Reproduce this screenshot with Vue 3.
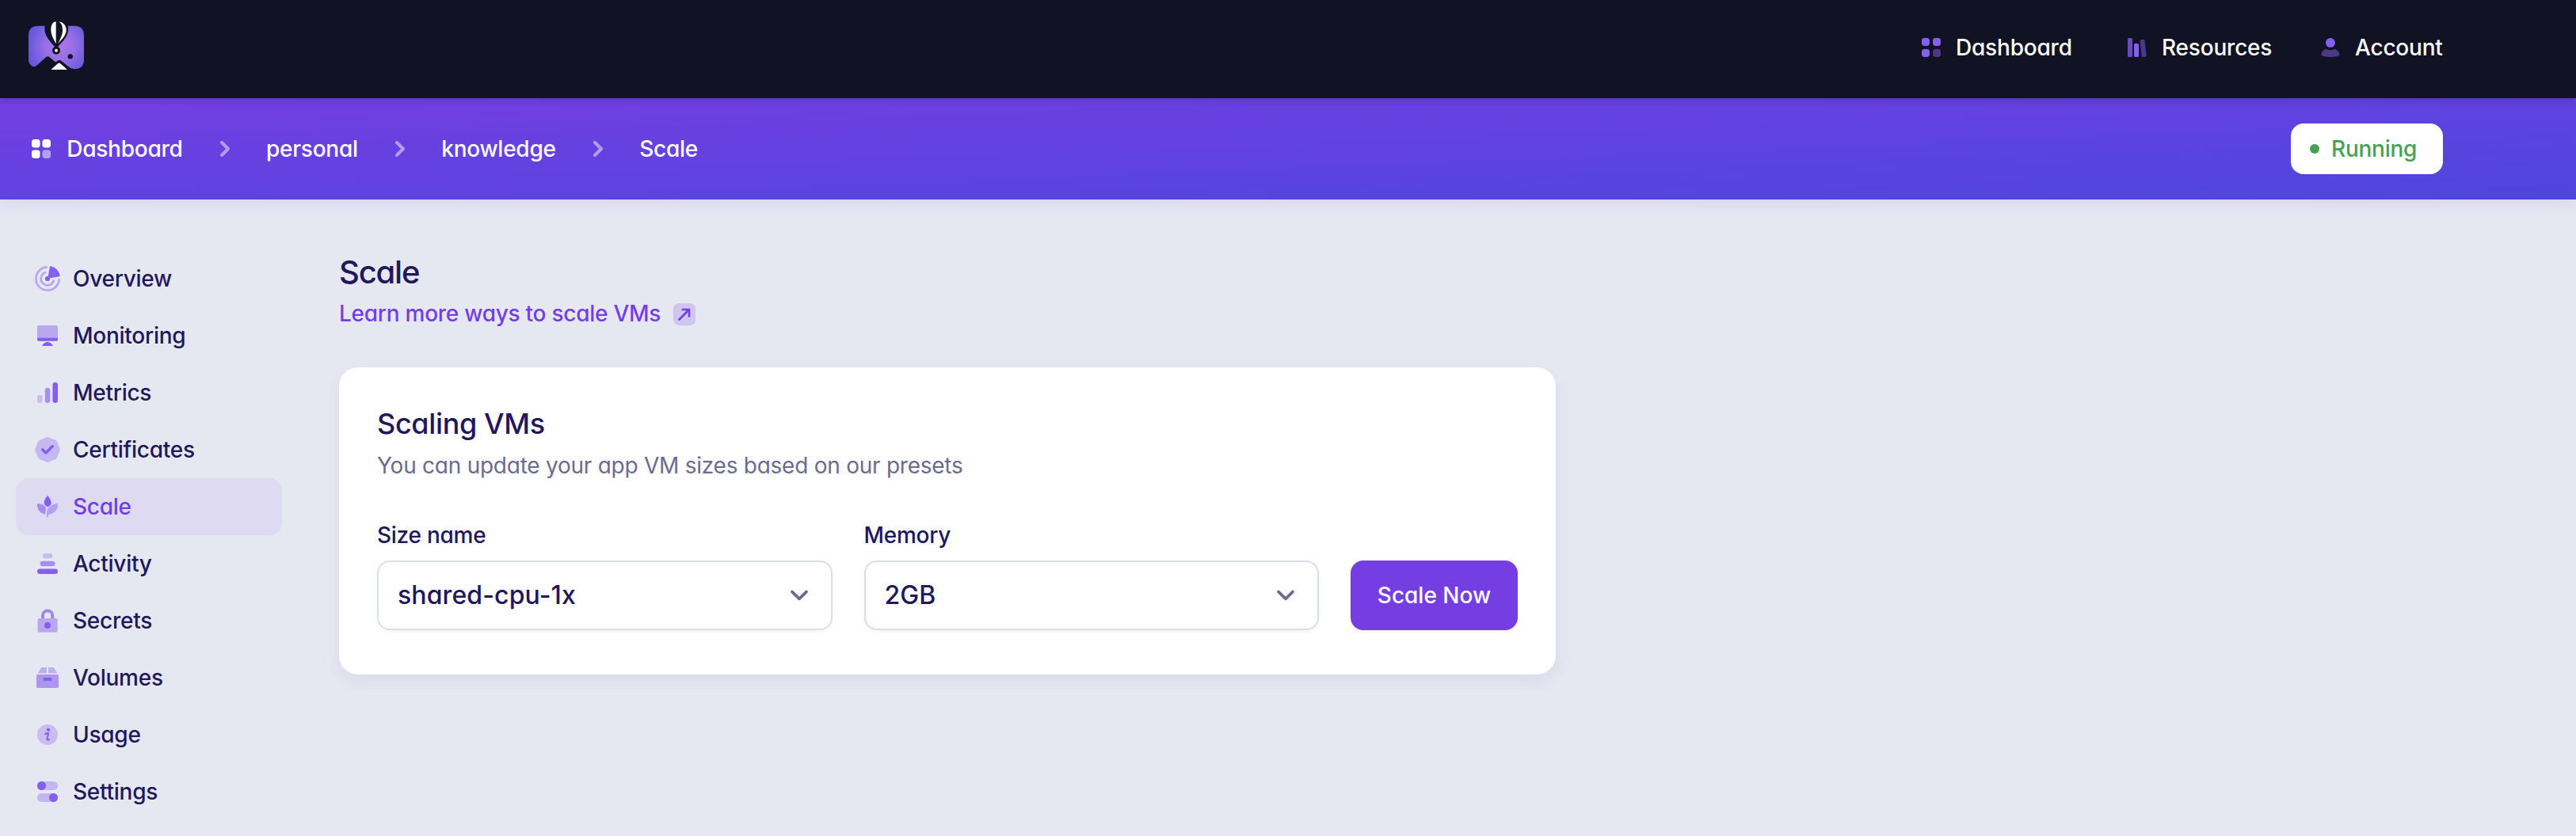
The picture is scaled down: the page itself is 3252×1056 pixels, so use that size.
<script setup>
const solid = '#855fee'
const sidebar = [
  { name: 'Overview' },
  { name: 'Monitoring' },
  { name: 'Metrics' },
  { name: 'Certificates' },
  { name: 'Scale', active: true },
  { name: 'Activity' },
  { name: 'Secrets' },
  { name: 'Volumes' },
  { name: 'Usage' },
  { name: 'Settings' },
]
const crumbs = ['personal', 'knowledge', 'Scale']
const fields = [
  { label: 'Size name', value: 'shared-cpu-1x' },
  { label: 'Memory', value: '2GB' },
]
</script>

<template>
  <div class="page">
    <header class="top">
      <a class="logo">
        <svg width="72" height="64" viewBox="0 0 216 192">
          <defs>
            <radialGradient id="logoGlow" gradientUnits="userSpaceOnUse" cx="118" cy="96" r="118">
              <stop offset="0" stop-color="#ab76e8" />
              <stop offset="0.45" stop-color="#9870e4" />
              <stop offset="1" stop-color="#6757dc" />
            </radialGradient>
          </defs>
          <path d="M36 20H174Q210 20 210 56V148Q210 184 174 184Q162 184 150 174L124 153L20 176Q0 168 0 148V56Q0 20 36 20Z" fill="url(#logoGlow)" />
          <path d="M16 177Q24 176 34 168L66 139Q73 133 80 139L103 158L110 152Q117 147 124 153L152 176Q162 184 172 184V192H0V177Z" fill="#111223" />
          <path d="M62 19C58 45 66 64 98 98V104H112V98C146 64 154 45 149 19L134 0H78Z" fill="#111223" />
          <circle cx="105" cy="113" r="15" fill="#111223" />
          <circle cx="105" cy="113" r="6" fill="#fff" />
          <path d="M104 4C90 5 85 20 85 36C85 54 96 72 104 88Z" fill="#fff" />
          <path d="M115 4C134 7 143 20 143 36C143 56 124 74 111 88C122 68 129 52 129 36C129 20 124 10 115 4Z" fill="#fff" />
          <circle cx="158" cy="136" r="9.5" fill="#111223" />
          <path d="M85 186L112 162Q116 159 120 162L147 186Z" fill="#fff" />
        </svg>
      </a>
      <nav class="menu">
        <a class="menu-item dash">
          <svg width="24" height="24" viewBox="0 0 24 24" :fill="solid">
            <rect width="10" height="10" rx="3.4" /><rect x="14" width="10" height="10" rx="3.4" />
            <rect y="14" width="10" height="10" rx="3.4" /><rect x="14" y="14" width="10" height="10" rx="3.4" fill="#4c3788" />
          </svg>
          <span class="t28">Dashboard</span>
        </a>
        <a class="menu-item res">
          <svg width="24" height="24" viewBox="0 0 24 24">
            <rect width="6" height="24" rx="1.6" fill="#6a4cbe" />
            <rect x="8" y="7" width="6" height="17" rx="1.6" :fill="solid" />
            <rect x="16.6" y="2" width="6" height="22" rx="1.6" fill="#4c3788" transform="rotate(-6.5 19.6 13)" />
          </svg>
          <span class="t28">Resources</span>
        </a>
        <a class="menu-item acc">
          <svg width="24" height="24" viewBox="0 0 24 24">
            <circle cx="12" cy="6" r="6" :fill="solid" />
            <path d="M6.5 13.8C8 15.6 16 15.6 17.5 13.8C21 15 23.5 18 23.5 21C23.5 23 18 24 12 24S.5 23 .5 21C.5 18 3 15 6.5 13.8Z" fill="#4c3788" />
          </svg>
          <span class="t28">Account</span>
        </a>
      </nav>
    </header>

    <div class="bar">
      <nav class="crumbs">
        <svg class="home" width="24" height="24" viewBox="0 0 24 24" fill="#fff">
          <rect width="10.5" height="10.5" rx="3.4" /><rect x="13.5" width="10.5" height="10.5" rx="3.4" />
          <rect y="13.5" width="10.5" height="10.5" rx="3.4" /><rect x="13.5" y="13.5" width="10.5" height="10.5" rx="3.4" fill="#b5a0f0" />
        </svg>
        <span class="t28">Dashboard</span>
        <template v-for="c in crumbs" :key="c">
          <svg class="sep" width="12" height="20" viewBox="0 0 12 20" fill="none" stroke="#b29cee" stroke-width="4" stroke-linecap="round" stroke-linejoin="round">
            <path d="M2 2L10 10L2 18" />
          </svg>
          <span class="t28">{{ c }}</span>
        </template>
      </nav>
      <div class="status"><i class="dot"></i><span class="t28">Running</span></div>
    </div>

    <div class="body">
      <aside class="side">
        <a v-for="item in sidebar" :key="item.name" class="side-item" :class="{ active: item.active }">
          <svg width="32" height="32" viewBox="0 0 32 32" :fill="solid">
            <g v-if="item.name === 'Overview'">
              <g fill="none" stroke="#b9a5f0" stroke-width="2.7" stroke-linecap="round">
                <path d="M14.7 1.4A14.65 14.65 0 1 0 30.6 17.2" />
                <path d="M13.3 8.3A8.2 8.2 0 1 0 23.7 18.7" />
              </g>
              <circle cx="16" cy="16" r="3.1" />
              <path d="M16.2 15.8L18.8 1.2Q19 0 20.2 .3C26 1.6 30.4 6 31.7 11.8Q32 13 30.8 13.2Z" />
            </g>
            <g v-else-if="item.name === 'Monitoring'">
              <rect x="3" y="3" width="26" height="20" rx="2" fill="#b9a8ef" />
              <path d="M3 18.7H29V20.8Q29 22.8 27 22.8H5Q3 22.8 3 20.8Z" />
              <path d="M9.3 29C9.8 26.5 13 24 16 24S22.2 26.5 22.7 29Z" />
            </g>
            <g v-else-if="item.name === 'Metrics'">
              <rect x="3" y="19" width="6.6" height="10" rx="3.3" fill="#c8bcf1" />
              <rect x="12.8" y="9.7" width="6.5" height="19.3" rx="3.2" fill="#a88ef0" />
              <rect x="22.4" y="3" width="6.6" height="26" rx="3.3" />
            </g>
            <g v-else-if="item.name === 'Certificates'">
              <g fill="#c5b8f1">
                <circle cx="16" cy="16" r="14.7" />
                <circle v-for="n in 8" :key="n" cx="16" cy="6" r="5.9" :transform="`rotate(${n * 45} 16 16)`" />
              </g>
              <path d="M9.8 16L14 20L22.2 11.7" fill="none" :stroke="solid" stroke-width="3.7" stroke-linecap="round" stroke-linejoin="round" />
            </g>
            <g v-else-if="item.name === 'Scale'">
              <path d="M16 2C18.6 4.7 20.7 8.2 20.7 11.5C20.7 13.5 18.5 15.3 16 16.2C13.5 15.3 11.6 13.5 11.6 11.5C11.6 8.2 13.4 4.7 16 2Z" />
              <path d="M3 12.2C9 11.8 13.8 15 14.2 18.5C13.4 20.5 13.5 23 13 25.6C6.5 24.5 2.6 19 3 12.2Z" fill="#a88bef" />
              <path d="M29 12.2C21.5 11.6 15.3 17 15 23V28.3Q15 29.5 16 29.5T17 28.3V25.8C24.5 25.4 29.4 19.5 29 12.2Z" fill="#b3a0ef" />
            </g>
            <g v-else-if="item.name === 'Activity'">
              <rect x="9.8" y="3" width="12.5" height="6.6" rx="3.3" fill="#c8bcf1" />
              <rect x="6.6" y="12.8" width="19" height="6.5" rx="3.2" fill="#a88ef0" />
              <rect x="3" y="22.4" width="26" height="6.6" rx="3.3" />
            </g>
            <g v-else-if="item.name === 'Secrets'">
              <path d="M10 14V9.5A6.1 6.1 0 0 1 22.2 9.5V14" fill="none" stroke="#a284ef" stroke-width="4" />
              <rect x="3.5" y="13" width="25.2" height="17.7" rx="2.5" fill="#b9a8ef" />
              <circle cx="16" cy="22" r="4" />
            </g>
            <g v-else-if="item.name === 'Volumes'">
              <path d="M8.3 3H15V10.4H3.7Z M17 3H23.8L28.4 10.4H17Z" fill="#beb0f0" />
              <rect x="2" y="12" width="28" height="17" rx="1.3" fill="#ad97ee" />
              <rect x="10.7" y="16" width="10.6" height="4" rx=".6" />
            </g>
            <g v-else-if="item.name === 'Usage'">
              <circle cx="16" cy="16" r="13" fill="#c8bcf1" />
              <circle cx="17" cy="9.9" r="2.1" />
              <path d="M13.2 15.3Q14.8 13.7 17.2 14.2L15.3 21.2Q15 22.9 18 22.3" fill="none" :stroke="solid" stroke-width="2.1" stroke-linecap="round" stroke-linejoin="round" />
            </g>
            <g v-else>
              <rect x="3" y="3" width="26" height="11" rx="5.5" fill="#c3b5f0" />
              <rect x="3" y="18" width="26" height="11" rx="5.5" fill="#c3b5f0" />
              <circle cx="8.5" cy="8.5" r="5.5" /><circle cx="23.5" cy="23.5" r="5.5" />
            </g>
          </svg>
          <span class="t28">{{ item.name }}</span>
        </a>
      </aside>

      <main class="main">
        <h1>Scale</h1>
        <a class="learn">
          <span class="t28">Learn more ways to scale VMs</span>
          <svg width="28" height="28" viewBox="0 0 28 28">
            <rect width="28" height="28" rx="7" fill="#d0c5ee" />
            <path d="M7.5 20.5L20 8M11.8 8H20V16.5" fill="none" stroke="#743ee4" stroke-width="2.7" stroke-linecap="round" stroke-linejoin="round" />
          </svg>
        </a>
        <section class="card">
          <h2>Scaling VMs</h2>
          <p>You can update your app VM sizes based on our presets</p>
          <div class="form">
            <label v-for="f in fields" :key="f.label" class="field">
              <span class="t28">{{ f.label }}</span>
              <span class="select">
                <span class="value">{{ f.value }}</span>
                <svg width="24" height="16" viewBox="0 0 24 16" fill="none" stroke="#6b6c8d" stroke-width="3.8" stroke-linecap="round" stroke-linejoin="round">
                  <path d="M3 3.5L12 12.3L21 3.5" />
                </svg>
              </span>
            </label>
            <button class="go" type="button">Scale Now</button>
          </div>
        </section>
      </main>
    </div>
  </div>
</template>

<style>
body { margin: 0; background: #e6e8f1; }
</style>

<style scoped>
.page {
  width: 3252px; height: 1056px; overflow: hidden;
  display: flex; flex-direction: column;
  background: #e6e8f1; color: #21175a;
  font-family: Inter, "Liberation Sans", sans-serif;
  font-feature-settings: "cv11";
  font-weight: 500;
}
svg { display: block; flex: none; }
.t28 { font-size: 28px; line-height: 40px; letter-spacing: -.26px; white-space: nowrap; }
.top {
  height: 124px; flex: none; box-sizing: border-box; padding: 0 168px 4px 36px;
  display: flex; justify-content: space-between; align-items: center;
  background: #111223; color: #fff;
  box-shadow: 0 2px 8px rgba(17, 18, 35, .22);
  position: relative; z-index: 2;
}
.logo { margin-bottom: 4px; }
.menu { display: flex; align-items: center; }
.menu-item { display: flex; align-items: center; gap: 19px; }
.menu-item .t28 { letter-spacing: -.2px; }
.dash { width: 260px; }
.res { width: 244px; }
.acc { width: 154px; }
.bar {
  height: 128px; flex: none; box-sizing: border-box; padding: 0 168px 0 40px;
  display: flex; justify-content: space-between; align-items: center;
  background: linear-gradient(to bottom right, #743ee2, #4d46dc);
  color: #fff;
  box-shadow: 0 4px 20px rgba(96, 56, 190, .12);
}
.crumbs { display: flex; align-items: center; }
.home { margin-right: 20.3px; }
.sep { margin: 0 46.5px 0 47px; }
.status {
  width: 192px; height: 64px; box-sizing: border-box; padding-left: 24px; border-radius: 16px;
  display: flex; align-items: center; gap: 15px;
  background: #fff; color: #47a054;
}
.dot { width: 12px; height: 12px; border-radius: 50%; background: #47a054; }
.body { display: flex; padding: 64px 0 0 20px; }
.side { width: 336px; margin-right: 72px; display: flex; flex-direction: column; flex: none; }
.side-item {
  height: 72px; box-sizing: border-box; padding-left: 24px; border-radius: 16px;
  display: flex; align-items: center; gap: 16px;
}
.side-item.active { background: #dddaf1; color: #743ee4; }
.main { width: 1536px; }
h1 { margin: 0 0 4px; font-size: 40px; line-height: 56px; font-weight: 500; letter-spacing: -1.2px; }
.learn { display: flex; align-items: center; gap: 16px; height: 40px; color: #743ee4; }
.learn svg { margin-top: 2px; }
.card {
  margin-top: 48px; height: 388px; box-sizing: border-box; padding: 48px;
  border-radius: 24px; background: #fff;
  box-shadow: 0 8px 24px -2px rgba(96, 56, 190, .1);
}
h2 { margin: 0; font-size: 36px; line-height: 46px; font-weight: 500; letter-spacing: -.36px; }
p { margin: 10px 0 0; font-size: 28px; line-height: 40px; font-weight: 400; letter-spacing: -.25px; color: #6b6c8d; }
.form { display: flex; align-items: flex-end; gap: 40px; margin-top: 48px; }
.field { flex: 1; display: flex; flex-direction: column; gap: 12px; }
.select {
  height: 88px; box-sizing: border-box; padding: 0 28px 0 24px; border: 2px solid #d8dfea; border-radius: 16px;
  display: flex; align-items: center; justify-content: space-between;
  box-shadow: 0 2px 4px rgba(0, 0, 0, .05);
}
.value { font-size: 32px; line-height: 48px; letter-spacing: .1px; }
.go {
  width: 211px; height: 88px; border: 0; border-radius: 16px; padding: 0;
  background: #743ee2; color: #fff; font: inherit; font-size: 28px; font-feature-settings: inherit;
  box-shadow: 0 2px 4px rgba(0, 0, 0, .05);
}
</style>
